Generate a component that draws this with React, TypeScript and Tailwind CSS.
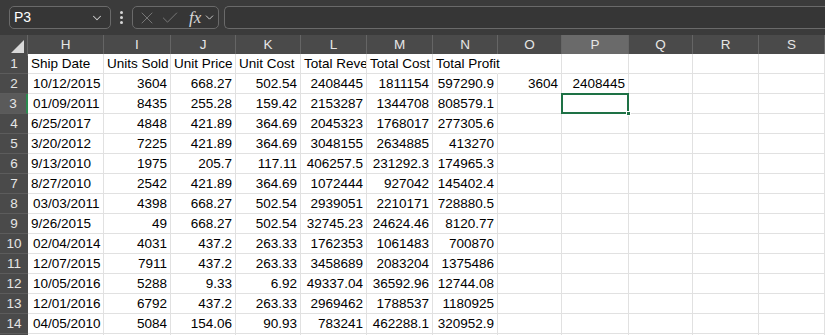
import React from 'react';
import { ChevronDown, X, Check } from 'lucide-react';

const COLS = ['H', 'I', 'J', 'K', 'L', 'M', 'N', 'O', 'P', 'Q', 'R', 'S'];

type Row = { date: string; pad?: boolean; vals: string[]; extra?: string[] };

const ROWS: Row[] = [
  { date: '10/12/2015', pad: true, vals: ['3604', '668.27', '502.54', '2408445', '1811154', '597290.9'], extra: ['3604', '2408445'] },
  { date: '01/09/2011', pad: true, vals: ['8435', '255.28', '159.42', '2153287', '1344708', '808579.1'] },
  { date: '6/25/2017', vals: ['4848', '421.89', '364.69', '2045323', '1768017', '277305.6'] },
  { date: '3/20/2012', vals: ['7225', '421.89', '364.69', '3048155', '2634885', '413270'] },
  { date: '9/13/2010', vals: ['1975', '205.7', '117.11', '406257.5', '231292.3', '174965.3'] },
  { date: '8/27/2010', vals: ['2542', '421.89', '364.69', '1072444', '927042', '145402.4'] },
  { date: '03/03/2011', pad: true, vals: ['4398', '668.27', '502.54', '2939051', '2210171', '728880.5'] },
  { date: '9/26/2015', vals: ['49', '668.27', '502.54', '32745.23', '24624.46', '8120.77'] },
  { date: '02/04/2014', pad: true, vals: ['4031', '437.2', '263.33', '1762353', '1061483', '700870'] },
  { date: '12/07/2015', pad: true, vals: ['7911', '437.2', '263.33', '3458689', '2083204', '1375486'] },
  { date: '10/05/2016', pad: true, vals: ['5288', '9.33', '6.92', '49337.04', '36592.96', '12744.08'] },
  { date: '12/01/2016', pad: true, vals: ['6792', '437.2', '263.33', '2969462', '1788537', '1180925'] },
  { date: '04/05/2010', pad: true, vals: ['5084', '154.06', '90.93', '783241', '462288.1', '320952.9'] },
  { date: '', vals: ['', '', '', '', '', ''] },
];

const gridCols =
  'grid grid-cols-[28px_76px_67px_65px_65px_66px_66px_65px_64px_67px_64px_66px_1fr]';

function Cell({ children, right, className = '' }: { children?: React.ReactNode; right?: boolean; className?: string }) {
  return (
    <div
      className={`relative h-5 whitespace-nowrap border-r border-b border-[#e1e1e1] bg-white px-[3px] leading-[19px] text-black ${
        right ? 'text-right' : 'text-left'
      } ${className.includes('overflow-visible') ? '' : 'overflow-hidden'} ${className}`}
    >
      {children}
    </div>
  );
}

export default function App() {
  return (
    <div className="h-[335px] w-[825px] overflow-hidden bg-white text-[13.5px]" style={{ fontFamily: '"Liberation Sans", Arial, sans-serif' }}>
      {/* Formula bar */}
      <div className="flex h-[35px] items-center bg-[#3b3b3b] pl-[9px]">
        <div className="flex h-[23px] w-[102px] items-center justify-between rounded-[5px] border border-[#6a6a6a] bg-[#363636] pl-[4px] pr-[6px] text-[14px] text-white">
          <span>P3</span>
          <ChevronDown className="h-[14px] w-[14px] text-[#cfcfcf]" strokeWidth={1.75} />
        </div>
        <div className="flex w-[21px] flex-col items-center gap-[2px]">
          <span className="h-[3px] w-[3px] rounded-full bg-[#d6d6d6]" />
          <span className="h-[3px] w-[3px] rounded-full bg-[#d6d6d6]" />
          <span className="h-[3px] w-[3px] rounded-full bg-[#d6d6d6]" />
        </div>
        <div className="flex h-[23px] w-[87px] items-center rounded-[5px] border border-[#6a6a6a] bg-[#363636] pl-[4px]">
          <X className="h-[20px] w-[20px] text-[#7d7d7d]" strokeWidth={1.1} />
          <Check className="ml-[3px] h-[20px] w-[20px] text-[#7d7d7d]" strokeWidth={1.1} />
          <span
            className="ml-[9px] text-[17px] italic leading-none text-[#d8d8d8]"
            style={{ fontFamily: '"Liberation Serif", "Times New Roman", serif' }}
          >
            fx
          </span>
          <ChevronDown className="ml-[2px] h-[13px] w-[13px] text-[#cfcfcf]" strokeWidth={1.75} />
        </div>
        <div className="ml-[5px] h-[23px] flex-1 rounded-l-[5px] border border-r-0 border-[#6a6a6a] bg-[#363636]" />
      </div>

      {/* Column headers */}
      <div className={`${gridCols} h-[19px] bg-[#4a4a4a] text-[13.5px] leading-[19px] text-[#e6e6e6]`}>
        <div className="relative border-r border-[#656565]">
          <div
            className="absolute right-[3px] bottom-[3px] h-0 w-0"
            style={{ borderBottom: '13px solid #d9d9d9', borderLeft: '13px solid transparent' }}
          />
        </div>
        {COLS.map((c) => (
          <div
            key={c}
            className={`border-r border-r-[#656565] text-center ${
              c === 'P' ? 'border-b-2 border-b-[#2a8a4f] bg-[#6a6a6a]' : ''
            }`}
          >
            {c}
          </div>
        ))}
      </div>

      {/* Header row */}
      <div className={gridCols}>
        <div className="h-5 border-b border-[#5c5c5c] bg-[#4a4a4a] text-center leading-[20px] text-[#e6e6e6]">1</div>
        <Cell>Ship Date</Cell>
        <Cell>Units Sold</Cell>
        <Cell>Unit Price</Cell>
        <Cell>Unit Cost</Cell>
        <Cell>Total Revenue</Cell>
        <Cell>Total Cost</Cell>
        <Cell className="overflow-visible z-10 border-r-transparent">
          <span className="relative">Total Profit</span>
        </Cell>
        <Cell className="bg-transparent" />
        <Cell />
        <Cell />
        <Cell />
        <Cell />
      </div>

      {ROWS.map((r, i) => {
        const n = i + 2;
        return (
          <div key={n} className={gridCols}>
            <div
              className={`h-5 border-b border-[#5c5c5c] bg-[#4a4a4a] text-center leading-[20px] text-[#e6e6e6] ${
                n === 3 ? 'border-r-2 border-r-[#2a8a4f] bg-[#5a5a5a]' : ''
              }`}
            >
              {n}
            </div>
            <Cell className={r.pad ? 'pl-[5px]' : ''}>{r.date}</Cell>
            {r.vals.map((v, j) => (
              <Cell key={j} right>
                {v}
              </Cell>
            ))}
            <Cell right>{r.extra ? r.extra[0] : ''}</Cell>
            <Cell right className={n === 3 ? 'overflow-visible z-10' : ''}>
              {r.extra ? r.extra[1] : ''}
              {n === 3 && (
                <>
                  <div className="pointer-events-none absolute -top-px -left-px right-[-1px] bottom-[-1px] border-2 border-[#1e7145]" />
                  <div className="absolute right-[-3px] bottom-[-3px] h-[5px] w-[5px] border border-white bg-[#1e7145]" />
                </>
              )}
            </Cell>
            <Cell />
            <Cell />
            <Cell />
          </div>
        );
      })}
    </div>
  );
}
